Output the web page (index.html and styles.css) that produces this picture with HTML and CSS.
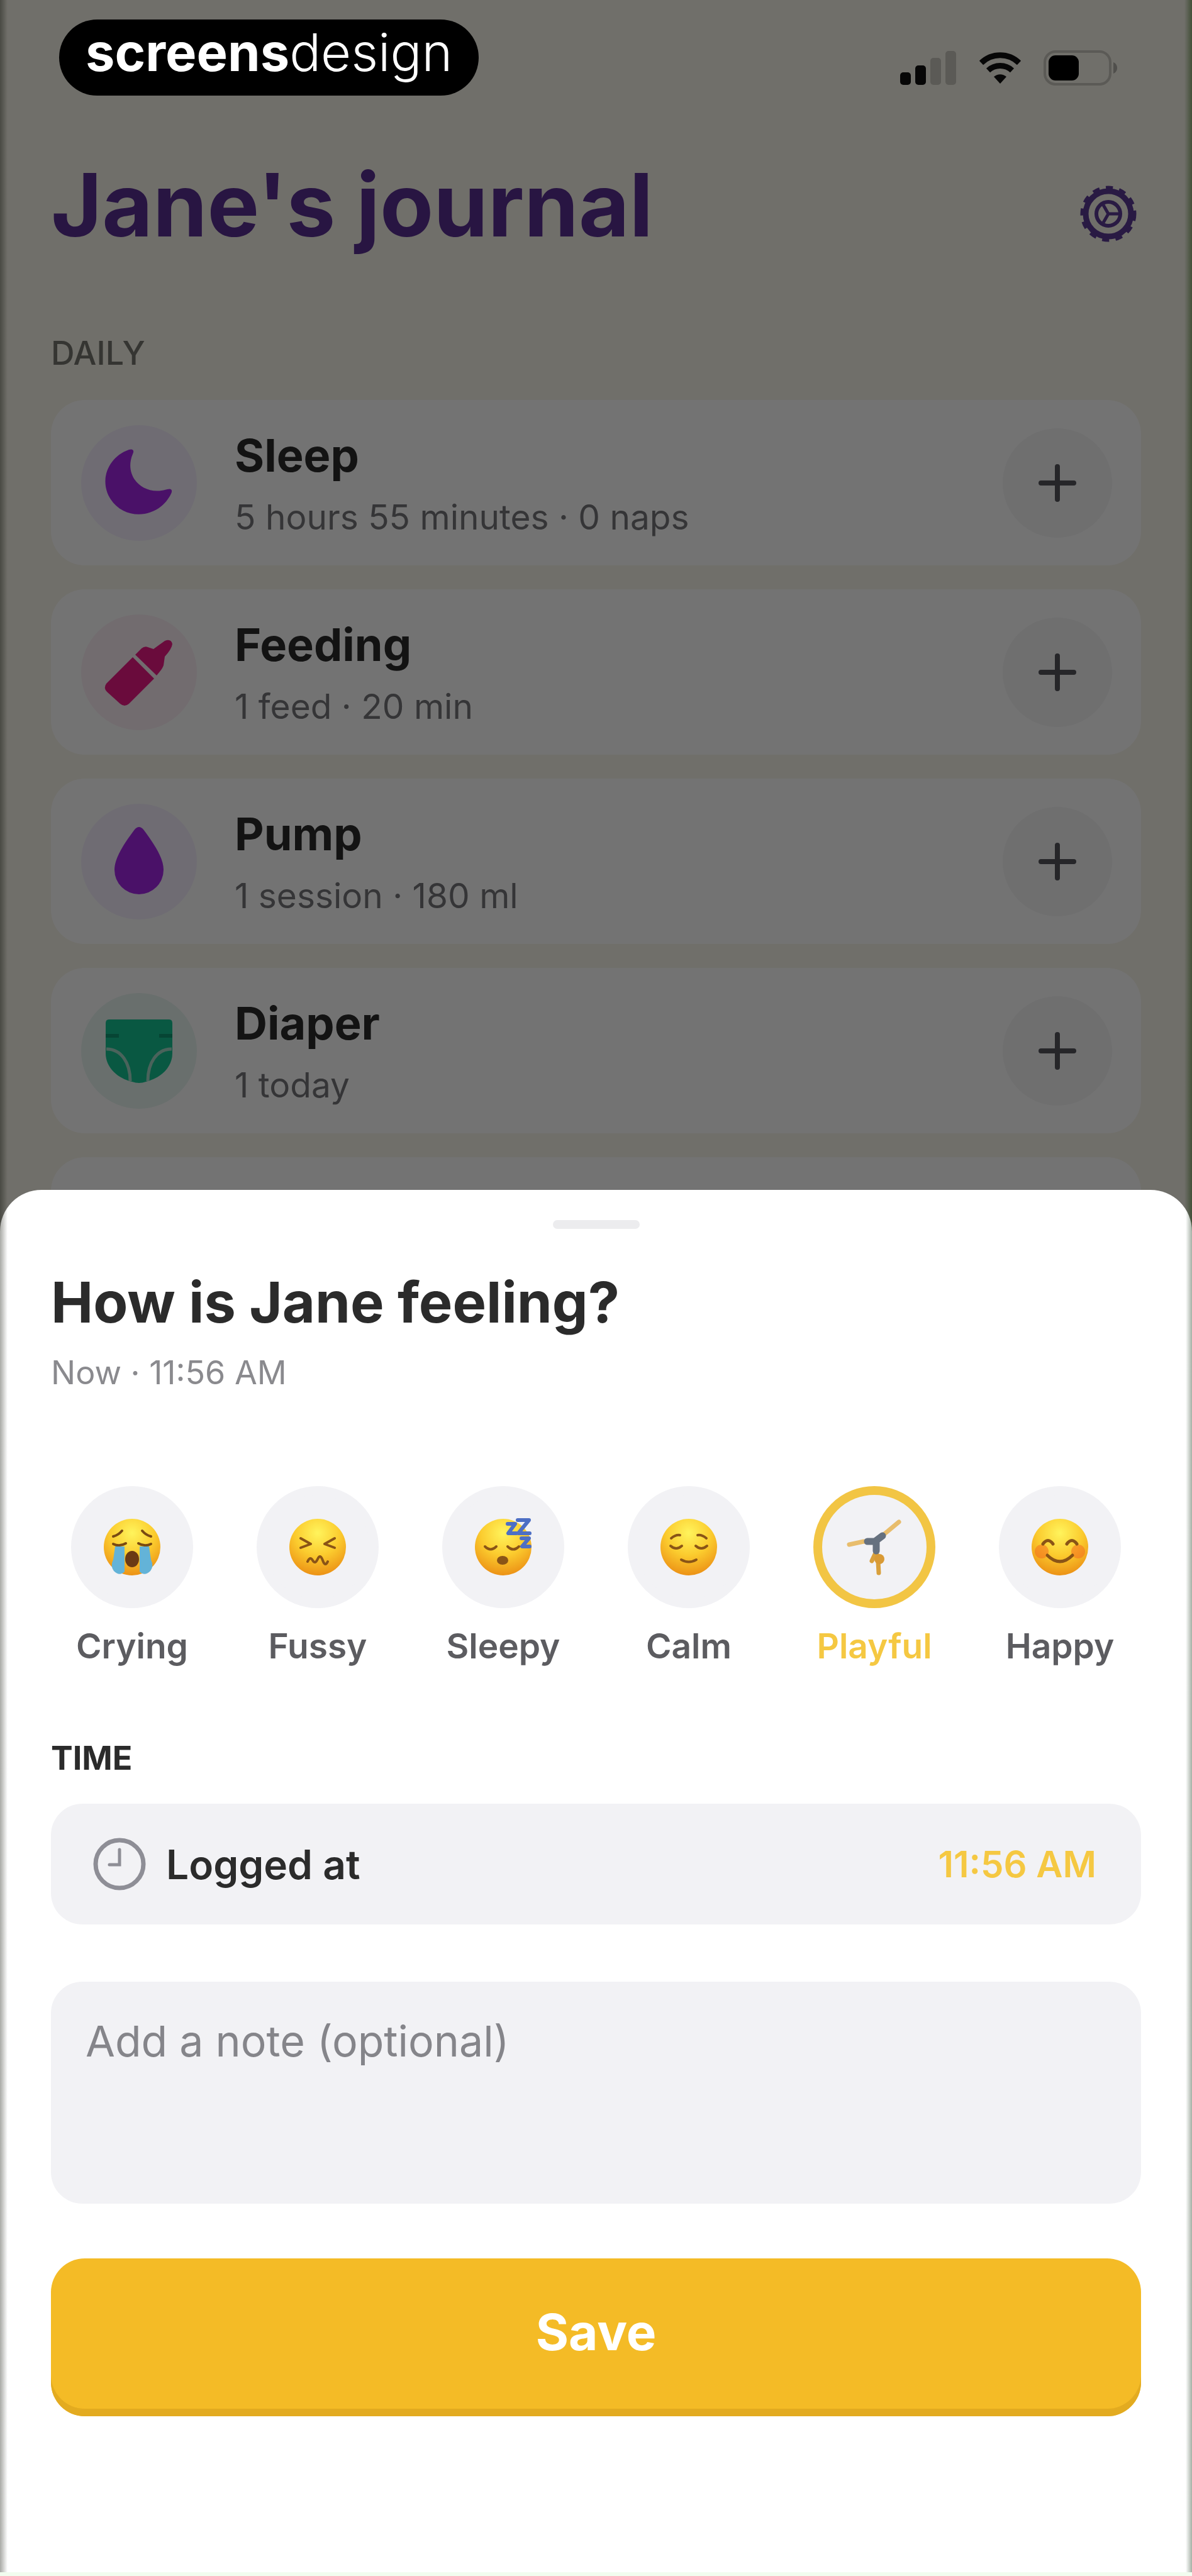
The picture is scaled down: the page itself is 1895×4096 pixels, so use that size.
FILE: index.html
```html
<!DOCTYPE html>
<html lang="en">
<head>
  <meta charset="UTF-8">
  <meta name="viewport" content="width=device-width, initial-scale=1.0">
  <title>Jane's journal</title>
  <link rel="stylesheet" href="styles.css">
</head>
<body>
  <div class="screen">
    <main class="journal">
      <div class="status-bar">
        <div class="brand"><b>screens</b><span>design</span></div>
        <div class="status-icons">
          <svg width="90" height="54" viewBox="0 0 90 54">
            <rect x="0" y="34" width="17" height="20" rx="5" fill="#111"/>
            <rect x="24" y="23" width="17" height="31" rx="5" fill="#111"/>
            <rect x="48" y="11" width="17" height="43" rx="5" fill="#111" opacity=".2"/>
            <rect x="72" y="0" width="17" height="54" rx="5" fill="#111" opacity=".2"/>
          </svg>
          <svg width="68" height="50" viewBox="0 0 68 50">
            <path d="M34 50 24 39a15 15 0 0 1 20 0z" fill="#111"/>
            <path d="M15 29a28 28 0 0 1 38 0M4 17a43 43 0 0 1 60 0" fill="none" stroke="#111" stroke-width="9"/>
          </svg>
          <svg width="118" height="56" viewBox="0 0 118 56">
            <rect x="2" y="2" width="104" height="52" rx="17" fill="none" stroke="#111" stroke-width="4" opacity=".2"/>
            <rect x="8" y="8" width="48" height="40" rx="11" fill="#000"/>
            <path d="M111 19c8 3 8 15 0 18z" fill="#111" opacity=".3"/>
          </svg>
        </div>
      </div>

      <header class="journal-header">
        <h1>Jane's journal</h1>
        <button class="settings" type="button" aria-label="Settings">
          <svg width="92" height="92" viewBox="0 0 92 92" fill="none" stroke="#5b3a96">
            <circle cx="46" cy="46" r="36" stroke-width="9"/>
            <circle cx="46" cy="46" r="41" stroke-width="7" stroke-dasharray="11 10"/>
            <circle cx="46" cy="46" r="19" stroke-width="6"/>
            <path d="M46 46 62 46M46 46 38 32M46 46 38 60" stroke-width="5"/>
          </svg>
        </button>
      </header>

      <h2 class="section-label">DAILY</h2>
      <ul class="card-list">
        <li class="card">
          <span class="card-icon purple">
            <svg width="116" height="116" viewBox="0 0 116 116"><path d="M42 5C8 17-6 55 13 84c22 34 76 32 96-9 3-6 0-9-6-7C64 80 33 47 48 12c3-6 0-9-6-7z" fill="#a426e6"/></svg>
          </span>
          <div class="card-text"><h3>Sleep</h3><p>5 hours 55 minutes · 0 naps</p></div>
          <button class="add" type="button" aria-label="Add sleep"><svg width="64" height="64" viewBox="0 0 64 64"><path d="M32 6v52M6 32h52"/></svg></button>
        </li>
        <li class="card">
          <span class="card-icon pink">
            <svg width="116" height="116" viewBox="0 0 116 116">
              <path d="M6 76 48 34 82 68 42 108q-7 6-14 0L7 89q-6-6-1-13z" fill="#ec1a86"/>
              <path d="M52 30 62 20q5-4 10-2l9 3 18-13q10-4 12 5-1 8-12 20l-2 14q-2 6-11 16z" fill="#ec1a86"/>
            </svg>
          </span>
          <div class="card-text"><h3>Feeding</h3><p>1 feed · 20 min</p></div>
          <button class="add" type="button" aria-label="Add feeding"><svg width="64" height="64" viewBox="0 0 64 64"><path d="M32 6v52M6 32h52"/></svg></button>
        </li>
        <li class="card">
          <span class="card-icon purple">
            <svg width="116" height="116" viewBox="0 0 116 116"><path d="M51 7q7-8 14 0c18 24 32 46 32 64a39 39 0 0 1-78 0c0-18 14-40 32-64z" fill="#a426e6"/></svg>
          </span>
          <div class="card-text"><h3>Pump</h3><p>1 session · 180 ml</p></div>
          <button class="add" type="button" aria-label="Add pump"><svg width="64" height="64" viewBox="0 0 64 64"><path d="M32 6v52M6 32h52"/></svg></button>
        </li>
        <li class="card">
          <span class="card-icon green">
            <svg width="116" height="116" viewBox="0 0 116 116">
              <path d="M10 8h96q5 0 5 6v48c0 23-20 40-42 45q-11 4-22 0C25 102 5 85 5 62V14q0-6 5-6z" fill="#14c492"/>
              <path d="M6 55c24 0 38 22 38 51M110 55c-24 0-38 22-38 51" fill="none" stroke="#a5dccb" stroke-width="5"/>
              <path d="M5 34h21M90 34h21" stroke="#0e9a74" stroke-width="6"/>
            </svg>
          </span>
          <div class="card-text"><h3>Diaper</h3><p>1 today</p></div>
          <button class="add" type="button" aria-label="Add diaper"><svg width="64" height="64" viewBox="0 0 64 64"><path d="M32 6v52M6 32h52"/></svg></button>
        </li>
        <li class="card"></li>
      </ul>
      <div class="backdrop"></div>
    </main>

    <form class="sheet">
      <div class="handle"></div>
      <h2>How is Jane feeling?</h2>
      <p class="sheet-time">Now · 11:56 AM</p>

      <svg width="0" height="0" class="defs">
        <defs>
          <radialGradient id="face" cx=".5" cy=".25" r=".8">
            <stop offset="0" stop-color="#fff45c"/>
            <stop offset=".5" stop-color="#fbcb2e"/>
            <stop offset="1" stop-color="#ea8a12"/>
          </radialGradient>
        </defs>
      </svg>

      <div class="moods">
        <label class="mood">
          <input type="radio" name="mood" value="crying">
          <span class="mood-circle">
            <svg width="94" height="94" viewBox="0 0 94 94">
              <circle cx="47" cy="47" r="45" fill="url(#face)"/>
              <path d="M17 42q10 5 20-1M57 41q10 6 20 1M17 30q8-2 14-9M77 30q-8-2-14-9" fill="none" stroke="#7a4a12" stroke-width="4" stroke-linecap="round"/>
              <path d="M20 46h15v40q-8 8-17-1-6-8-1-18zM59 46h15l3 21q5 10-1 18-9 9-17 1z" fill="#63b3d8"/>
              <ellipse cx="47" cy="66" rx="11" ry="13" fill="#6b3a14"/>
            </svg>
          </span>
          <span class="mood-name">Crying</span>
        </label>
        <label class="mood">
          <input type="radio" name="mood" value="fussy">
          <span class="mood-circle">
            <svg width="94" height="94" viewBox="0 0 94 94">
              <circle cx="47" cy="47" r="45" fill="url(#face)"/>
              <path d="M20 33l16 9-16 6M74 33l-16 9 16 6" fill="none" stroke="#8a5416" stroke-width="4" stroke-linecap="round" stroke-linejoin="round"/>
              <path d="M31 70q4-9 8-2t8-2 8 2 8 2" fill="none" stroke="#8a5416" stroke-width="4" stroke-linecap="round"/>
            </svg>
          </span>
          <span class="mood-name">Fussy</span>
        </label>
        <label class="mood">
          <input type="radio" name="mood" value="sleepy">
          <span class="mood-circle">
            <svg width="94" height="94" viewBox="0 0 94 94">
              <circle cx="47" cy="47" r="45" fill="url(#face)"/>
              <path d="M18 46q9 9 18 0M54 46q9 9 18 0" fill="none" stroke="#8a5416" stroke-width="4" stroke-linecap="round"/>
              <ellipse cx="46" cy="68" rx="9" ry="7" fill="#8a5416"/>
              <path d="M54 10h12L55 25h13M70 4h18L71 25h18M76 33h12L77 46h12" fill="none" stroke="#4d6fc4" stroke-width="6" stroke-linejoin="round" stroke-linecap="round"/>
            </svg>
          </span>
          <span class="mood-name">Sleepy</span>
        </label>
        <label class="mood">
          <input type="radio" name="mood" value="calm">
          <span class="mood-circle">
            <svg width="94" height="94" viewBox="0 0 94 94">
              <circle cx="47" cy="47" r="45" fill="url(#face)"/>
              <path d="M18 45q9 8 18 0M58 45q9 8 18 0M35 67q12 7 24 0M19 33q7-6 14-5M75 33q-7-6-14-5" fill="none" stroke="#8a5416" stroke-width="4" stroke-linecap="round"/>
            </svg>
          </span>
          <span class="mood-name">Calm</span>
        </label>
        <label class="mood">
          <input type="radio" name="mood" value="playful" checked>
          <span class="mood-circle">
            <!-- cartwheel -->
            <svg width="94" height="94" viewBox="0 0 94 94" fill="none" stroke-linecap="round" stroke-linejoin="round">
              <path d="M48 40 30 38 7 43M53 34 68 22 86 7" stroke="#e8bd6c" stroke-width="7"/>
              <path d="M50 54 53 70 54 88M50 54 43 69" stroke="#d9a03c" stroke-width="7"/>
              <path d="M36 38 48 38 60 29M50 38v15" stroke="#66717f" stroke-width="11"/>
              <circle cx="55" cy="66" r="8" fill="#d99a35"/>
            </svg>
          </span>
          <span class="mood-name">Playful</span>
        </label>
        <label class="mood">
          <input type="radio" name="mood" value="happy">
          <span class="mood-circle">
            <svg width="94" height="94" viewBox="0 0 94 94">
              <circle cx="47" cy="47" r="45" fill="url(#face)"/>
              <circle cx="18" cy="54" r="11" fill="#f4661d" opacity=".5"/>
              <circle cx="76" cy="54" r="11" fill="#f4661d" opacity=".5"/>
              <path d="M20 42q8-11 16 0M58 42q8-11 16 0M27 60q20 20 40 0" fill="none" stroke="#8a5416" stroke-width="5" stroke-linecap="round"/>
            </svg>
          </span>
          <span class="mood-name">Happy</span>
        </label>
      </div>

      <h3 class="field-label">TIME</h3>
      <div class="time-row">
        <svg width="84" height="84" viewBox="0 0 84 84" fill="none" stroke="#8e8e96" stroke-linecap="round">
          <circle cx="42" cy="42" r="38" stroke-width="7"/>
          <path d="M42 19v24H26" stroke-width="5"/>
        </svg>
        <label for="logged-at">Logged at</label>
        <button id="logged-at" class="time-value" type="button">11:56 AM</button>
      </div>

      <textarea class="note" aria-label="Note" placeholder="Add a note (optional)"></textarea>
      <button class="save" type="submit">Save</button>
    </form>
  </div>
</body>
</html>
```
FILE: styles.css
```css
* {
  box-sizing: border-box;
}

body {
  margin: 0;
  font-family: Inter, "Liberation Sans", sans-serif;
  color: #2b2b2b;
}

h1,
h2,
h3,
p,
ul {
  margin: 0;
  padding: 0;
}

button {
  border: none;
  padding: 0;
  background: none;
  font-family: inherit;
  cursor: pointer;
}

svg {
  display: block;
  flex: none;
}

.screen {
  position: relative;
  height: 100vh;
  overflow: hidden;
}

/* journal behind the sheet */
.journal {
  position: relative;
  height: 100%;
  padding: 31px 81px 0;
  overflow: hidden;
  background: linear-gradient(to right, #a3a496, #f8f5ea 12px, #f8f5ea calc(100% - 12px), #92b07c);
}

.backdrop {
  position: absolute;
  inset: 0;
  background: rgba(0, 0, 0, 0.55);
}

.status-bar {
  display: flex;
  justify-content: space-between;
  align-items: center;
  padding: 0 37px 0 13px;
}

.brand {
  position: relative;
  z-index: 1;
  height: 121px;
  padding: 0 42px 16px;
  border-radius: 61px;
  background: #000;
  color: #fff;
  font-size: 83px;
  line-height: 105px;
}

.brand span {
  font-weight: 300;
}

.status-icons {
  display: flex;
  align-items: center;
  gap: 35px;
  margin-top: 32px;
}

.journal-header {
  display: flex;
  justify-content: space-between;
  align-items: center;
  margin-top: 94px;
}

.journal-header h1 {
  color: #5a2f92;
  font-size: 139px;
  line-height: 160px;
  font-weight: 700;
}

.settings {
  margin: 28px 6px 0 0;
}

.section-label {
  margin-top: 124px;
  color: #77776f;
  font-size: 52px;
  line-height: 64px;
  font-weight: 500;
}

.card-list {
  display: flex;
  flex-direction: column;
  gap: 38px;
  margin-top: 42px;
  list-style: none;
}

.card {
  display: flex;
  align-items: center;
  min-height: 263px;
  padding: 0 46px 0 48px;
  border-radius: 54px;
  background: #fff;
}

.card-icon {
  display: flex;
  align-items: center;
  justify-content: center;
  width: 184px;
  height: 184px;
  border-radius: 50%;
}

.purple {
  background: #f5f0ff;
}

.pink {
  background: #fceff6;
}

.green {
  background: #e9f6f2;
}

.card-text {
  flex: 1;
  padding: 0 0 0 60px;
}

.card-text h3 {
  font-size: 72px;
  line-height: 92px;
  font-weight: 700;
}

.card-text p {
  margin-top: 16px;
  color: #77777a;
  font-size: 55px;
  line-height: 72px;
}

.add {
  display: flex;
  align-items: center;
  justify-content: center;
  width: 174px;
  height: 174px;
  border-radius: 50%;
  background: #f5f5f7;
}

.add path {
  fill: none;
  stroke: #55555c;
  stroke-width: 8;
  stroke-linecap: round;
}

/* bottom sheet */
.sheet {
  position: absolute;
  left: 0;
  right: 0;
  bottom: 0;
  padding: 48px 81px 248px;
  border-bottom: 6px solid #f1fdef;
  border-radius: 66px 66px 0 0;
  background: linear-gradient(to right, #a9aaa6, #fff 12px, #fff calc(100% - 10px), #a5b0a5);
}

.handle {
  width: 138px;
  height: 14px;
  margin: 0 auto;
  border-radius: 7px;
  background: #ececee;
}

.sheet h2 {
  margin-top: 61px;
  font-size: 90px;
  line-height: 112px;
  font-weight: 700;
}

.sheet-time {
  margin-top: 20px;
  color: #8a8a8e;
  font-size: 52px;
  line-height: 72px;
}

.defs {
  position: absolute;
}

.moods {
  display: flex;
  justify-content: space-between;
  margin-top: 144px;
  padding: 0 32px;
}

.mood {
  display: flex;
  flex-direction: column;
  align-items: center;
  width: 194px;
  cursor: pointer;
}

.mood input {
  position: absolute;
  opacity: 0;
}

.mood-circle {
  display: flex;
  align-items: center;
  justify-content: center;
  width: 194px;
  height: 194px;
  border: 14px solid #f2f2f5;
  border-radius: 50%;
  background: #f2f2f5;
}

.mood-name {
  margin-top: 26px;
  color: #5c5c60;
  font-size: 55px;
  line-height: 68px;
  font-weight: 600;
}

.mood input:checked + .mood-circle {
  border-color: #f2c544;
}

.mood input:checked ~ .mood-name {
  color: #f5c842;
}

.field-label {
  margin-top: 113px;
  font-size: 52px;
  line-height: 64px;
  font-weight: 700;
}

.time-row {
  display: flex;
  align-items: center;
  height: 192px;
  margin-top: 40px;
  padding: 0 71px 0 67px;
  border-radius: 50px;
  background: #f2f2f5;
}

.time-row label {
  flex: 1;
  margin-left: 32px;
  font-size: 64px;
  font-weight: 600;
}

.time-value {
  color: #f5c842;
  font-size: 58px;
  font-weight: 600;
}

.note {
  display: block;
  width: 100%;
  height: 353px;
  margin-top: 91px;
  padding: 52px 55px;
  border: none;
  border-radius: 50px;
  background: #f2f2f5;
  font-family: inherit;
  font-size: 68px;
  line-height: 84px;
  resize: none;
}

.note::placeholder {
  color: #85858a;
}

.save {
  display: block;
  width: 100%;
  height: 251px;
  margin-top: 87px;
  padding-bottom: 18px;
  border-radius: 54px;
  background: #f4bb26;
  box-shadow: inset 0 -12px 0 #e3ab20;
  color: #fff;
  font-size: 80px;
  font-weight: 700;
}
```
